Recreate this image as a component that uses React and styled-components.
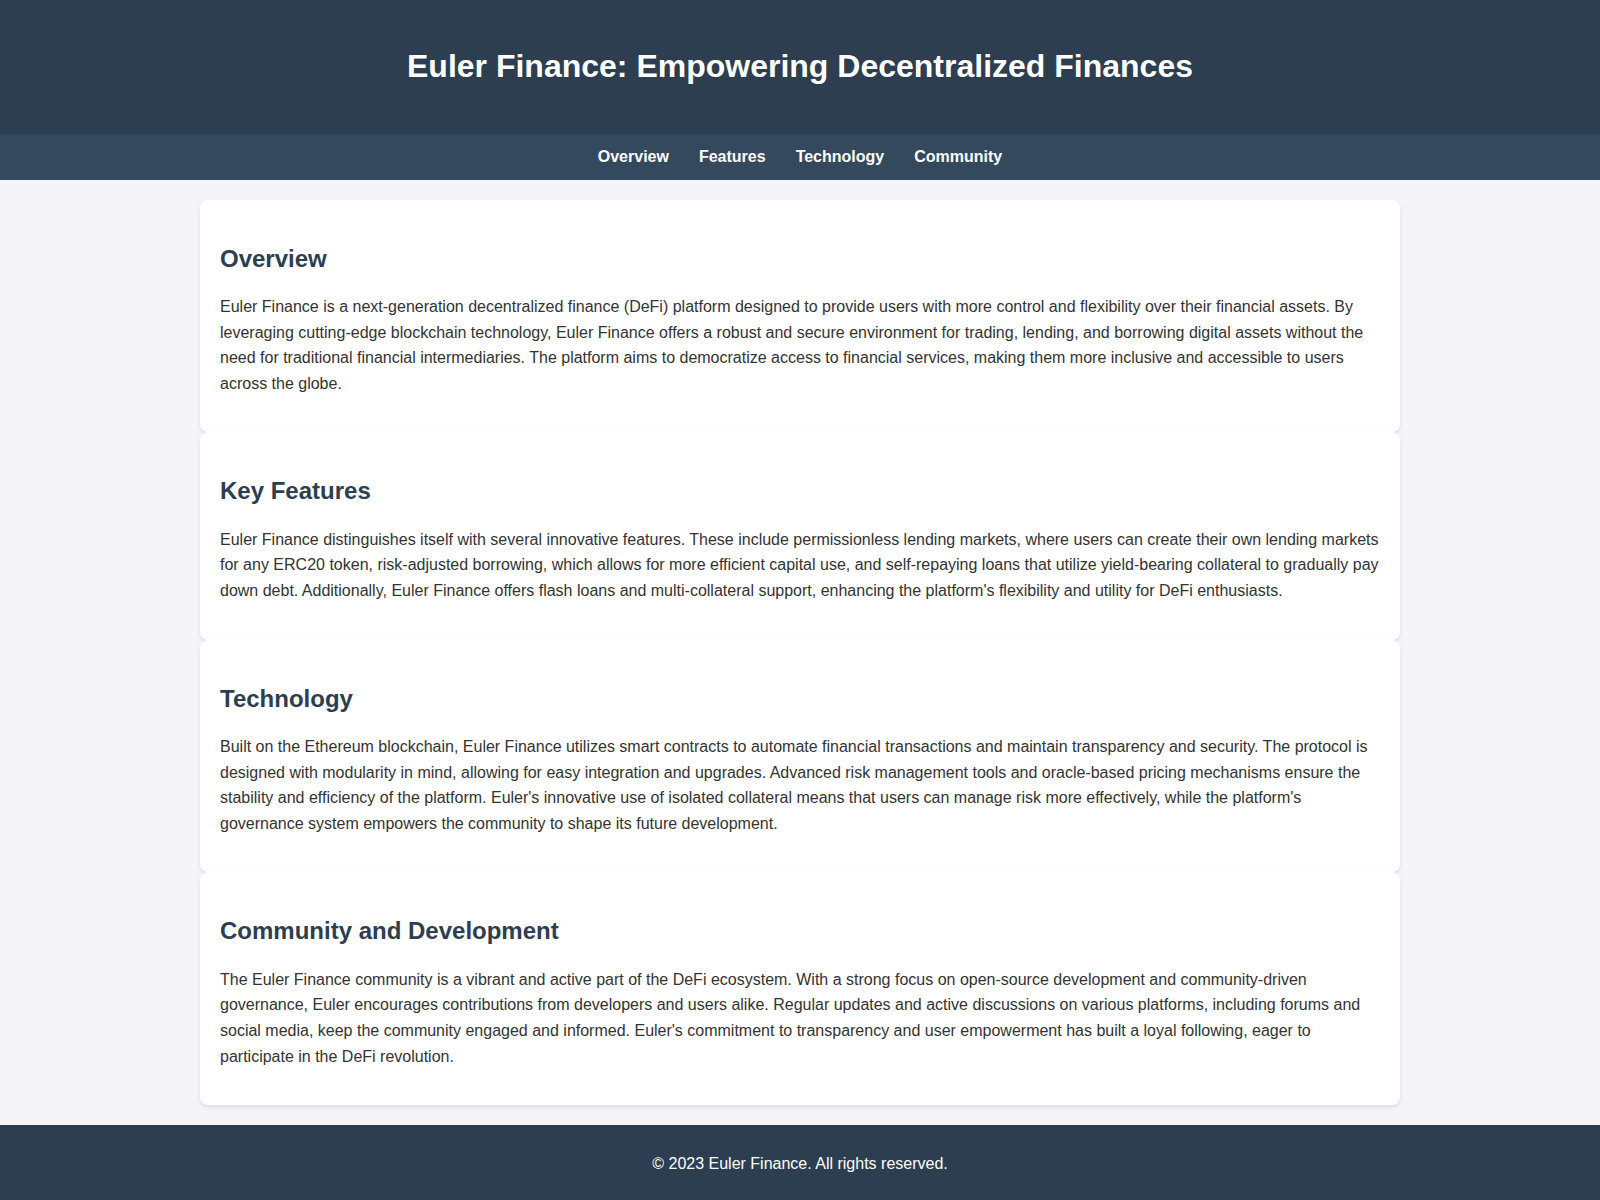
import React from "react";
import styled, { createGlobalStyle } from "styled-components";

const GlobalStyle = createGlobalStyle`
  html, body {
    margin: 0;
    padding: 0;
  }
  body {
    font-family: "Liberation Sans", Arial, sans-serif;
    line-height: 1.6;
    color: #333;
    background: #f4f4f9;
  }
`;

const Header = styled.header`
  background: #2c3e50;
  color: #fff;
  padding: 20px;
  text-align: center;
`;

const Title = styled.h1`
  margin: 0.67em 0;
  font-size: 32px;
  font-weight: bold;
`;

const Nav = styled.nav`
  background: #34495e;
  padding: 10px;
  display: flex;
  justify-content: center;
`;

const NavLink = styled.a`
  color: #fff;
  text-decoration: none;
  font-weight: bold;
  font-size: 16px;
  margin: 0 15px;
`;

const Main = styled.main`
  max-width: 1200px;
  margin: 20px auto;
`;

const Card = styled.section`
  background: #fff;
  padding: 20px;
  border-radius: 8px;
  box-shadow: 0 2px 4px rgba(0, 0, 0, 0.1);
`;

const Heading = styled.h2`
  color: #2c3e50;
  font-size: 24px;
  margin: 20px 0 16px;
`;

const Para = styled.p`
  margin: 0 0 16px;
  font-size: 16px;
`;

const Footer = styled.footer`
  background: #2c3e50;
  color: #fff;
  text-align: center;
  padding: 10px;
`;

const FooterText = styled.p`
  margin: 16px 0;
  font-size: 16px;
`;

const sections = [
  {
    title: "Overview",
    text: "Euler Finance is a next-generation decentralized finance (DeFi) platform designed to provide users with more control and flexibility over their financial assets. By leveraging cutting-edge blockchain technology, Euler Finance offers a robust and secure environment for trading, lending, and borrowing digital assets without the need for traditional financial intermediaries. The platform aims to democratize access to financial services, making them more inclusive and accessible to users across the globe.",
  },
  {
    title: "Key Features",
    text: "Euler Finance distinguishes itself with several innovative features. These include permissionless lending markets, where users can create their own lending markets for any ERC20 token, risk-adjusted borrowing, which allows for more efficient capital use, and self-repaying loans that utilize yield-bearing collateral to gradually pay down debt. Additionally, Euler Finance offers flash loans and multi-collateral support, enhancing the platform's flexibility and utility for DeFi enthusiasts.",
  },
  {
    title: "Technology",
    text: "Built on the Ethereum blockchain, Euler Finance utilizes smart contracts to automate financial transactions and maintain transparency and security. The protocol is designed with modularity in mind, allowing for easy integration and upgrades. Advanced risk management tools and oracle-based pricing mechanisms ensure the stability and efficiency of the platform. Euler's innovative use of isolated collateral means that users can manage risk more effectively, while the platform's governance system empowers the community to shape its future development.",
  },
  {
    title: "Community and Development",
    text: "The Euler Finance community is a vibrant and active part of the DeFi ecosystem. With a strong focus on open-source development and community-driven governance, Euler encourages contributions from developers and users alike. Regular updates and active discussions on various platforms, including forums and social media, keep the community engaged and informed. Euler's commitment to transparency and user empowerment has built a loyal following, eager to participate in the DeFi revolution.",
  },
];

export default function App() {
  return (
    <>
      <GlobalStyle />
      <Header>
        <Title>Euler Finance: Empowering Decentralized Finances</Title>
      </Header>
      <Nav>
        <NavLink href="#overview">Overview</NavLink>
        <NavLink href="#features">Features</NavLink>
        <NavLink href="#technology">Technology</NavLink>
        <NavLink href="#community">Community</NavLink>
      </Nav>
      <Main>
        {sections.map((s) => (
          <Card key={s.title}>
            <Heading>{s.title}</Heading>
            <Para>{s.text}</Para>
          </Card>
        ))}
      </Main>
      <Footer>
        <FooterText>© 2023 Euler Finance. All rights reserved.</FooterText>
      </Footer>
    </>
  );
}
